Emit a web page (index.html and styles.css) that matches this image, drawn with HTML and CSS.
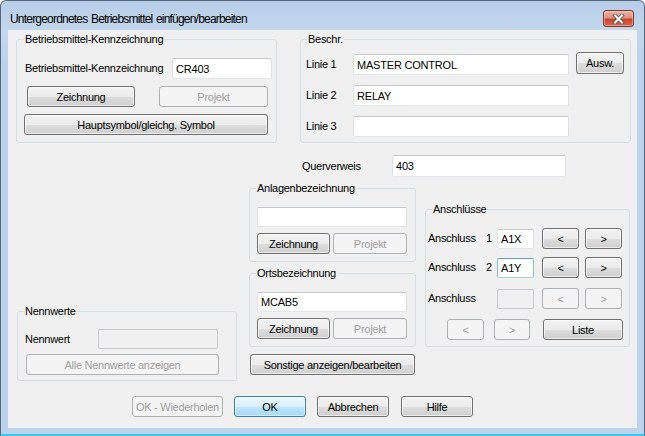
FILE: index.html
```html
<!DOCTYPE html>
<html lang="de">
<head>
<meta charset="utf-8">
<title>Untergeordnetes Betriebsmittel einfügen/bearbeiten</title>
<link rel="stylesheet" href="styles.css">
</head>
<body>
<div class="window">
  <div class="titlebar">
    <span class="title">Untergeordnetes Betriebsmittel einfügen/bearbeiten</span>
    <span class="close">
      <svg width="13" height="10" viewBox="0 0 13 10">
        <path d="M3 1.5 L10 8.5 M10 1.5 L3 8.5" stroke="#4d4d4d" stroke-width="3.6" stroke-linecap="square" fill="none"/>
        <path d="M3 1.5 L10 8.5 M10 1.5 L3 8.5" stroke="#ffffff" stroke-width="2" stroke-linecap="square" fill="none"/>
      </svg>
    </span>
  </div>
  <div class="client">
    <div class="top-row">
      <div class="group g-kenn">
        <div class="gtitle">Betriebsmittel-Kennzeichnung</div>
        <div class="row kenn-row">
          <span class="lbl">Betriebsmittel-Kennzeichnung</span>
          <input class="tb tb-kenn" type="text" value="CR403">
        </div>
        <div class="row btn-row">
          <button class="btn b-zeich">Zeichnung</button>
          <button class="btn dis b-proj">Projekt</button>
        </div>
        <button class="btn b-haupt">Hauptsymbol/gleichg. Symbol</button>
      </div>
      <div class="group g-beschr">
        <div class="gtitle">Beschr.</div>
        <div class="row b-row b-row1">
          <span class="lbl b-lbl">Linie 1</span>
          <input class="tb tb-linie" type="text" value="MASTER CONTROL">
          <button class="btn b-ausw">Ausw.</button>
        </div>
        <div class="row b-row">
          <span class="lbl b-lbl">Linie 2</span>
          <input class="tb tb-linie" type="text" value="RELAY">
        </div>
        <div class="row b-row">
          <span class="lbl b-lbl">Linie 3</span>
          <input class="tb tb-linie" type="text" value="">
        </div>
      </div>
    </div>

    <div class="mid">
      <div class="row quer">
        <span class="lbl quer-lbl">Querverweis</span>
        <input class="tb tb-quer" type="text" value="403">
      </div>

      <div class="col1">
        <div class="group g-nenn">
          <div class="gtitle">Nennwerte</div>
          <div class="row nenn-row">
            <span class="lbl nenn-lbl">Nennwert</span>
            <input class="tb dis tb-nenn" type="text" value="" disabled>
          </div>
          <button class="btn dis b-alle">Alle Nennwerte anzeigen</button>
        </div>
      </div>

      <div class="col2">
        <div class="group g-small g-anl">
          <div class="gtitle">Anlagenbezeichnung</div>
          <input class="tb tb-small" type="text" value="">
          <div class="row small-btns">
            <button class="btn b-sz">Zeichnung</button>
            <button class="btn dis b-sp">Projekt</button>
          </div>
        </div>
        <div class="group g-small g-orts">
          <div class="gtitle">Ortsbezeichnung</div>
          <input class="tb tb-small" type="text" value="MCAB5">
          <div class="row small-btns">
            <button class="btn b-sz">Zeichnung</button>
            <button class="btn dis b-sp">Projekt</button>
          </div>
        </div>
        <button class="btn b-sonst">Sonstige anzeigen/bearbeiten</button>
      </div>

      <div class="col3">
        <div class="group g-ansch">
          <div class="gtitle">Anschlüsse</div>
          <div class="row a-row a-row1">
            <span class="lbl a-lbl">Anschluss</span>
            <span class="lbl a-num">1</span>
            <input class="tb tb-a" type="text" value="A1X">
            <button class="btn b-a b-prev">&lt;</button>
            <button class="btn b-a b-next">&gt;</button>
          </div>
          <div class="row a-row a-row2">
            <span class="lbl a-lbl">Anschluss</span>
            <span class="lbl a-num">2</span>
            <input class="tb tb-a focus" type="text" value="A1Y">
            <button class="btn b-a b-prev">&lt;</button>
            <button class="btn b-a b-next">&gt;</button>
          </div>
          <div class="row a-row a-row3">
            <span class="lbl a-lbl">Anschluss</span>
            <span class="lbl a-num"></span>
            <input class="tb dis tb-a" type="text" value="" disabled>
            <button class="btn dis b-a b-prev">&lt;</button>
            <button class="btn dis b-a b-next">&gt;</button>
          </div>
          <div class="row a-row a-row4">
            <button class="btn dis b-a b-p4">&lt;</button>
            <button class="btn dis b-a b-n4">&gt;</button>
            <button class="btn b-liste">Liste</button>
          </div>
        </div>
      </div>
    </div>

    <div class="footer">
      <button class="btn dis f-wdh">OK - Wiederholen</button>
      <button class="btn default f-ok">OK</button>
      <button class="btn f-abbr">Abbrechen</button>
      <button class="btn f-hilfe">Hilfe</button>
    </div>
  </div>
</div>
</body>
</html>
```

FILE: styles.css
```css
* { box-sizing: border-box; }
html, body { margin: 0; padding: 0; }
body {
  width: 645px;
  height: 436px;
  overflow: hidden;
  background: #ffffff;
  font-family: "Liberation Sans", Arial, sans-serif;
  font-size: 11px;
  letter-spacing: -0.28px;
  color: #000;
}

/* window chrome */
.window {
  width: 645px;
  height: 436px;
  border: 1px solid #56687b;
  border-bottom: 2px solid #39c6ea;
  border-radius: 6px 6px 0 0;
  background: linear-gradient(#b7cde8 0px, #c3d8ee 29px, #bcd3eb 60px, #bcd3eb 100%);
  padding: 0 7px 6px 7px;
  display: flex;
  flex-direction: column;
}
.titlebar {
  height: 29px;
  flex: none;
  display: flex;
  align-items: flex-start;
  padding: 0 3px 0 2px;
}
.title {
  margin-top: 11px;
  font-family: "Liberation Sans", Arial, sans-serif;
  font-size: 12px;
  letter-spacing: -0.8px;
  word-spacing: 1px;
  line-height: 15px;
  color: #000;
}
.close {
  margin-left: auto;
  margin-top: 9px;
  width: 31px;
  height: 17px;
  border: 1px solid #83352b;
  border-radius: 3px;
  background: linear-gradient(#ebb2a5 0%, #dd9280 45%, #c9462c 55%, #d66a4f 100%);
  box-shadow: inset 0 0 0 1px rgba(255, 220, 210, 0.45);
  display: flex;
  align-items: center;
  justify-content: center;
}
.close svg { display: block; }

.client {
  height: 398px;
  flex: none;
  background: #f0f0f0;
  display: flex;
  flex-direction: column;
}

/* common controls */
.group {
  border: 1px solid #d5dfe5;
  border-radius: 3px;
}
.gtitle {
  width: fit-content;
  margin-top: -7px;
  line-height: 13px;
  padding: 0 1px;
  background: #f0f0f0;
  white-space: nowrap;
}
.row { display: flex; align-items: center; }
.lbl { white-space: nowrap; line-height: 13px; }

.tb {
  display: block;
  height: 21px;
  margin: 0;
  padding: 0 3px;
  font: inherit;
  font-size: 11px;
  letter-spacing: -0.2px;
  color: #000;
  background: #fff;
  border: 1px solid;
  border-color: #c3c7cf #dde1e7 #e3e7ec #dde1e7;
  border-radius: 2px;
  outline: none;
}
.tb.dis {
  background: #f0f0f0;
  border-color: #c6c9ce;
}
.tb.focus {
  border-color: #5d9fd9 #8cbbe6 #a9cdee #8cbbe6;
}

.btn {
  display: block;
  height: 21px;
  margin: 0;
  padding: 0;
  font: inherit;
  font-size: 11px;
  letter-spacing: -0.28px;
  color: #000;
  text-align: center;
  border: 1px solid #707070;
  border-radius: 3px;
  background: linear-gradient(#f3f3f3 0%, #ebebeb 50%, #dddddd 51%, #cfcfcf 100%);
  box-shadow: inset 0 0 0 1px rgba(255, 255, 255, 0.6);
  white-space: nowrap;
}
.btn.dis {
  color: #a0a0a0;
  border-color: #adb2b5;
  background: #f4f4f4;
  box-shadow: none;
}
.btn.default {
  border-color: #3c7fb1;
  background: linear-gradient(#eaf6fd 0%, #d9f0fc 50%, #bee6fd 51%, #a7d9f5 100%);
  box-shadow: inset 0 0 0 1px rgba(255, 255, 255, 0.5);
}

/* top row */
.top-row {
  display: flex;
  margin-top: 9px;
  padding-left: 8px;
  flex: none;
}
.g-kenn { width: 261px; height: 104px; }
.g-kenn .gtitle { margin-left: 7px; }
.kenn-row { margin-top: 12px; padding-left: 8px; }
.tb-kenn { width: 100px; margin-left: auto; margin-right: 4px; }
.btn-row { margin-top: 7px; }
.b-zeich { width: 108px; margin-left: 10px; }
.b-proj { width: 109px; margin-left: 24px; }
.b-haupt { width: 244px; margin-left: 7px; margin-top: 7px; }

.g-beschr { width: 331px; height: 104px; margin-left: 23px; }
.g-beschr .gtitle { margin-left: 6px; }
.b-row { margin-top: 10px; padding-left: 5px; align-items: flex-start; }
.b-row .lbl { line-height: 21px; }
.b-row1 { margin-top: 8px; }
.b-lbl { width: 47px; }
.tb-linie { width: 216px; }
.b-ausw { width: 48px; height: 22px; margin-left: 7px; margin-top: -2px; }

/* middle */
.mid {
  display: grid;
  grid-template-columns: 232px 176px 206px;
  padding-left: 9px;
  flex: none;
}
.quer {
  grid-column: 2 / 4;
  grid-row: 1;
  margin-top: 12px;
  padding-left: 53px;
}
.quer-lbl { width: 90px; }
.tb-quer { width: 174px; height: 22px; }

.col1 { grid-column: 1; grid-row: 2; }
.col2 { grid-column: 2; grid-row: 2; }
.col3 { grid-column: 3; grid-row: 2; }

.g-nenn { width: 220px; height: 70px; margin-top: 134px; }
.g-nenn .gtitle { margin-left: 6px; }
.nenn-row { margin-top: 11px; padding-left: 7px; }
.nenn-lbl { width: 73px; }
.tb-nenn { width: 120px; height: 20px; }
.b-alle { width: 193px; margin-left: 8px; margin-top: 5px; }

.g-small { width: 167px; height: 74px; margin-top: 11px; }
.g-small .gtitle { margin-left: 6px; }
.tb-small { width: 150px; height: 20px; margin-top: 12px; margin-left: 7px; }
.small-btns { margin-top: 6px; padding-left: 7px; }
.b-sz { width: 73px; }
.b-sp { width: 74px; margin-left: 3px; }
.b-sonst { width: 165px; margin-top: 7px; margin-left: 1px; }

.g-ansch { width: 205px; height: 138px; margin-top: 32px; }
.g-ansch .gtitle { margin-left: 6px; }
.a-row { padding-left: 2px; height: 21px; }
.a-row1 { margin-top: 12px; }
.a-row2 { margin-top: 8px; }
.a-row3 { margin-top: 10px; }
.a-row4 { margin-top: 10px; padding-left: 21px; }
.a-lbl { width: 58px; }
.a-num { width: 11px; }
.tb-a { width: 37px; height: 20px; }
.b-a { width: 37px; }
.b-prev { margin-left: 8px; }
.b-next { margin-left: 6px; }
.b-p4 { width: 37px; }
.b-n4 { width: 36px; margin-left: 10px; }
.b-liste { width: 80px; margin-left: 13px; }

/* footer */
.footer {
  margin-top: auto;
  margin-bottom: 11px;
  display: flex;
  padding-left: 124px;
  flex: none;
}
.f-wdh { width: 91px; }
.f-ok { width: 72px; margin-left: 11px; }
.f-abbr { width: 72px; margin-left: 11px; }
.f-hilfe { width: 72px; margin-left: 12px; }
```
